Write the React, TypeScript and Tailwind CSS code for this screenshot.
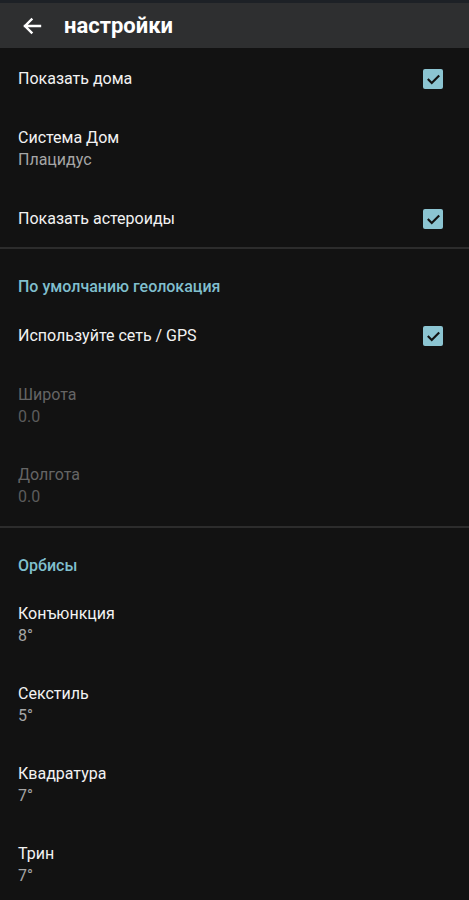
import React from "react";

function Check() {
  return (
    <div className="w-[20px] h-[20px] rounded-[2px] bg-[#8cc5d2] flex items-center justify-center">
      <svg viewBox="0 0 24 24" className="w-[17px] h-[17px]" fill="none" stroke="#121212" strokeWidth="3" strokeLinecap="square">
        <path d="M5 12.5l4.5 4.5L19 7.5" />
      </svg>
    </div>
  );
}

function SwitchRow({ title }: { title: string }) {
  return (
    <div className="h-[60px] pl-[18px] pr-[26px] flex items-center justify-between">
      <span className="text-[16px] text-[#f2f2f2]">{title}</span>
      <Check />
    </div>
  );
}

function InfoRow({ title, value, disabled }: { title: string; value: string; disabled?: boolean }) {
  return (
    <div className="h-[80px] pl-[18px] pt-[18px] flex flex-col">
      <span className={"text-[16px] leading-[22px] " + (disabled ? "text-[#656565]" : "text-[#f2f2f2]")}>{title}</span>
      <span className={"text-[16px] leading-[22px] " + (disabled ? "text-[#5c5c5c]" : "text-[#a6a6a6]")}>{value}</span>
    </div>
  );
}

function Category({ title }: { title: string }) {
  return (
    <div className="h-[57px] pl-[18px] pt-[26px]">
      <span className="text-[16px] leading-[20px] font-medium text-[#80bfcd]">{title}</span>
    </div>
  );
}

export default function App() {
  return (
    <div className="w-[469px] h-[900px] overflow-hidden bg-[#121212] font-['Roboto',sans-serif]">
      <div className="h-[3px] bg-[#1d2126]" />
      <div className="h-[45px] bg-[#2e2f30] flex items-center">
        <svg viewBox="0 0 24 24" className="w-[24px] h-[24px] ml-[20px]" fill="none" stroke="#ffffff" strokeWidth="2.4" strokeLinecap="square">
          <path d="M20 12H5M11.5 5.5L5 12l6.5 6.5" />
        </svg>
        <span className="ml-[20px] text-[22px] font-bold text-white">настройки</span>
      </div>
      <div className="h-[1px]" />
      <SwitchRow title="Показать дома" />
      <InfoRow title="Система Дом" value="Плацидус" />
      <SwitchRow title="Показать астероиды" />
      <div className="h-[2px] bg-[#2c2c2c] -mt-[2px]" />
      <Category title="По умолчанию геолокация" />
      <SwitchRow title="Используйте сеть / GPS" />
      <InfoRow title="Широта" value="0.0" disabled />
      <InfoRow title="Долгота" value="0.0" disabled />
      <div className="h-[2px] bg-[#2c2c2c]" />
      <Category title="Орбисы" />
      <InfoRow title="Конъюнкция" value="8°" />
      <InfoRow title="Секстиль" value="5°" />
      <InfoRow title="Квадратура" value="7°" />
      <InfoRow title="Трин" value="7°" />
    </div>
  );
}
